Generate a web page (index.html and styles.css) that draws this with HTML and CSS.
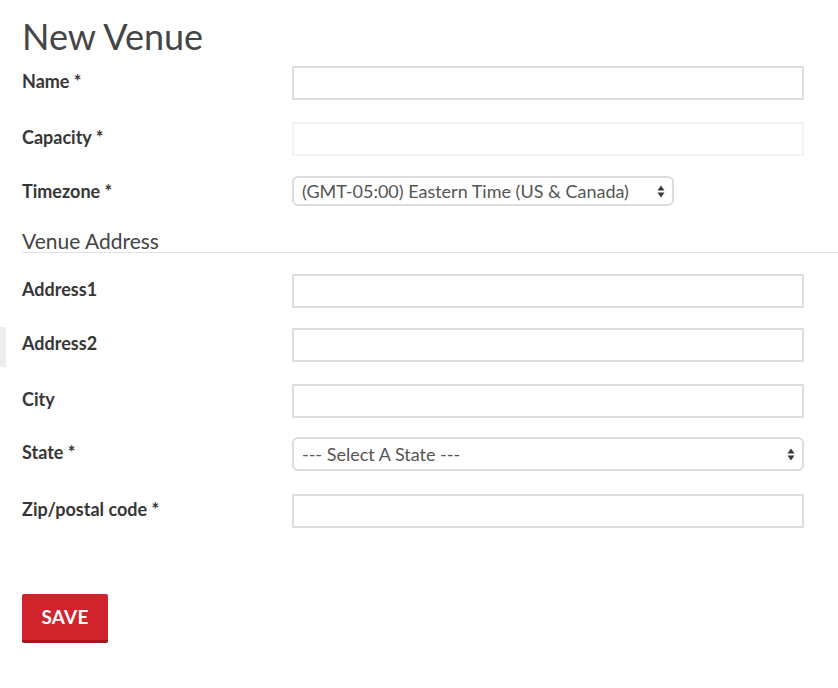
FILE: index.html
```html
<!DOCTYPE html>
<html lang="en">
<head>
<meta charset="utf-8">
<title>New Venue</title>
<link rel="stylesheet" href="styles.css">
</head>
<body>
<div class="edge-mark"></div>
<main class="page">
  <h1 class="title">New Venue</h1>
  <form class="venue-form">
    <div class="row row-name">
      <label class="label">Name *</label>
      <input class="input" type="text">
    </div>
    <div class="row row-capacity">
      <label class="label">Capacity *</label>
      <input class="input input-muted" type="text">
    </div>
    <div class="row row-timezone">
      <label class="label label-select">Timezone *</label>
      <div class="select-wrap select-tz">
        <div class="select">(GMT-05:00) Eastern Time (US &amp; Canada)</div>
        <svg class="arrows" width="8" height="13" viewBox="0 0 8 13"><path d="M4 0.5 L7.5 5.5 L0.5 5.5 Z M0.5 7.5 L7.5 7.5 L4 12.5 Z" fill="#3a3a3a"/></svg>
      </div>
    </div>

    <div class="legend">Venue Address</div>

    <div class="row row-a1">
      <label class="label">Address1</label>
      <input class="input" type="text">
    </div>
    <div class="row row-a2">
      <label class="label">Address2</label>
      <input class="input" type="text">
    </div>
    <div class="row row-city">
      <label class="label">City</label>
      <input class="input" type="text">
    </div>
    <div class="row row-state">
      <label class="label">State *</label>
      <div class="select-wrap select-state">
        <div class="select select-tall">--- Select A State ---</div>
        <svg class="arrows" width="8" height="13" viewBox="0 0 8 13"><path d="M4 0.5 L7.5 5.5 L0.5 5.5 Z M0.5 7.5 L7.5 7.5 L4 12.5 Z" fill="#3a3a3a"/></svg>
      </div>
    </div>
    <div class="row row-zip">
      <label class="label">Zip/postal code *</label>
      <input class="input" type="text">
    </div>

    <div class="actions">
      <button class="btn-save" type="button">SAVE</button>
    </div>
  </form>
</main>
</body>
</html>
```

FILE: styles.css
```css
* { box-sizing: border-box; }

html, body {
  margin: 0;
  padding: 0;
  background: #ffffff;
}

body {
  font-family: "Lato", "Open Sans", sans-serif;
  color: #333333;
  position: relative;
  min-height: 688px;
}

.edge-mark {
  position: absolute;
  left: 0;
  top: 327px;
  width: 6px;
  height: 40px;
  background: #ededed;
}

.page {
  padding: 0 0 0 22px;
}

.title {
  margin: 16px 0 10px;
  font-size: 36px;
  line-height: 40px;
  font-weight: 400;
  color: #454545;
}

.venue-form {
  margin: 0;
}

.row {
  display: grid;
  grid-template-columns: 270px 512px;
  align-items: start;
}

.label {
  display: block;
  padding-top: 4px;
  font-size: 18px;
  line-height: 22px;
  font-weight: 700;
  color: #363636;
}

.label-select { padding-top: 4px; }

.input {
  display: block;
  width: 512px;
  height: 34px;
  margin: 0;
  border: 2px solid #dedede;
  border-radius: 1px;
  background: #fff;
  font: inherit;
}

.input-muted {
  border-color: #f3f3f3;
}

.row-name { margin-bottom: 22px; }
.row-capacity { margin-bottom: 20px; }
.row-timezone { margin-bottom: 23px; }
.row-a1 { margin-bottom: 20px; }
.row-a2 { margin-bottom: 22px; }
.row-city { margin-bottom: 19px; }
.row-state { margin-bottom: 23px; }
.row-zip { margin-bottom: 66px; }

.select-wrap {
  position: relative;
}

.select-tz { width: 382px; }
.select-state { width: 512px; }

.select {
  height: 30px;
  padding: 0 24px 0 8px;
  border: 2px solid #dcdcdc;
  border-radius: 6px;
  background: #fff;
  font-size: 18px;
  line-height: 26px;
  color: #555555;
  white-space: nowrap;
}

.select-tall {
  height: 34px;
  line-height: 30px;
}

.arrows {
  position: absolute;
  right: 9px;
  top: 50%;
  margin-top: -6px;
}

.legend {
  width: 816px;
  font-size: 21px;
  line-height: 23px;
  font-weight: 400;
  color: #444444;
  border-bottom: 1px solid #e2e2e2;
  margin-bottom: 21px;
}

.actions {
  padding-bottom: 40px;
}

.btn-save {
  display: block;
  width: 86px;
  height: 49px;
  padding: 0 0 2px;
  border: 0;
  border-bottom: 3px solid #a8121a;
  border-radius: 2px;
  background: #d1232b;
  color: #ffffff;
  font-family: "Lato", sans-serif;
  font-size: 19px;
  font-weight: 700;
  letter-spacing: 0.2px;
  cursor: pointer;
}
```
